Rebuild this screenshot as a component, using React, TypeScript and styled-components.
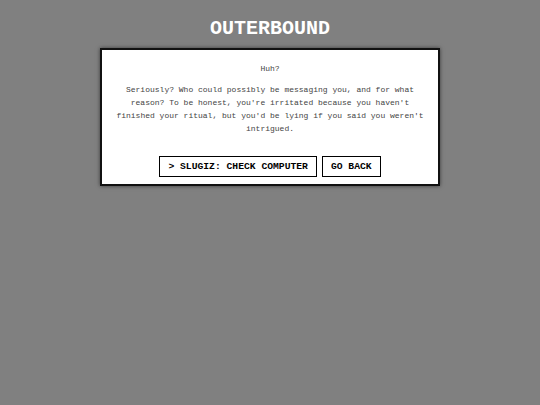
import React from 'react'
import styled, { createGlobalStyle } from 'styled-components'

const Global = createGlobalStyle`
html, body {
  margin: 0;
  padding: 0;
  background: #808080;
}
body {
  font-family: 'Courier New', 'Liberation Mono', monospace;
}
`

const Page = styled.div`
min-height: 405px;
display: flex;
flex-direction: column;
align-items: center;
padding-top: 17px;
box-sizing: border-box;
`

const Title = styled.h1`
margin: 0 0 7px;
font-size: 20px;
line-height: 24px;
font-weight: bold;
color: #fff;
`

const Card = styled.div`
width: 340px;
box-sizing: border-box;
background: #fff;
border: 2px solid #111;
box-shadow: 0 0 4px rgba(0, 0, 0, 0.55);
padding: 12px 12px 7px;
text-align: center;
color: #444;
font-size: 8px;
line-height: 13px;
`

const Text = styled.p<{ $gap?: number }>`
margin: 0 0 ${p => p.$gap ?? 0}px;
`

const Actions = styled.div`
display: flex;
justify-content: center;
gap: 5px;
`

const Button = styled.button`
font-family: 'Courier New', 'Liberation Mono', monospace;
font-weight: bold;
font-size: 9.7px;
line-height: 13px;
color: #000;
background: #fff;
border: 1px solid #000;
border-radius: 0;
padding: 3px 8px;
cursor: pointer;
`

export default function App() {
  return (
    <Page>
      <Global />
      <Title>OUTERBOUND</Title>
      <Card>
        <Text $gap={8}>Huh?</Text>
        <Text $gap={21}>
          Seriously? Who could possibly be messaging you, and for what reason? To be honest, you're irritated because you haven't finished your ritual, but you'd be lying if you said you weren't intrigued.
        </Text>
        <Actions>
          <Button>&gt; SLUGIZ: CHECK COMPUTER</Button>
          <Button>GO BACK</Button>
        </Actions>
      </Card>
    </Page>
  )
}
